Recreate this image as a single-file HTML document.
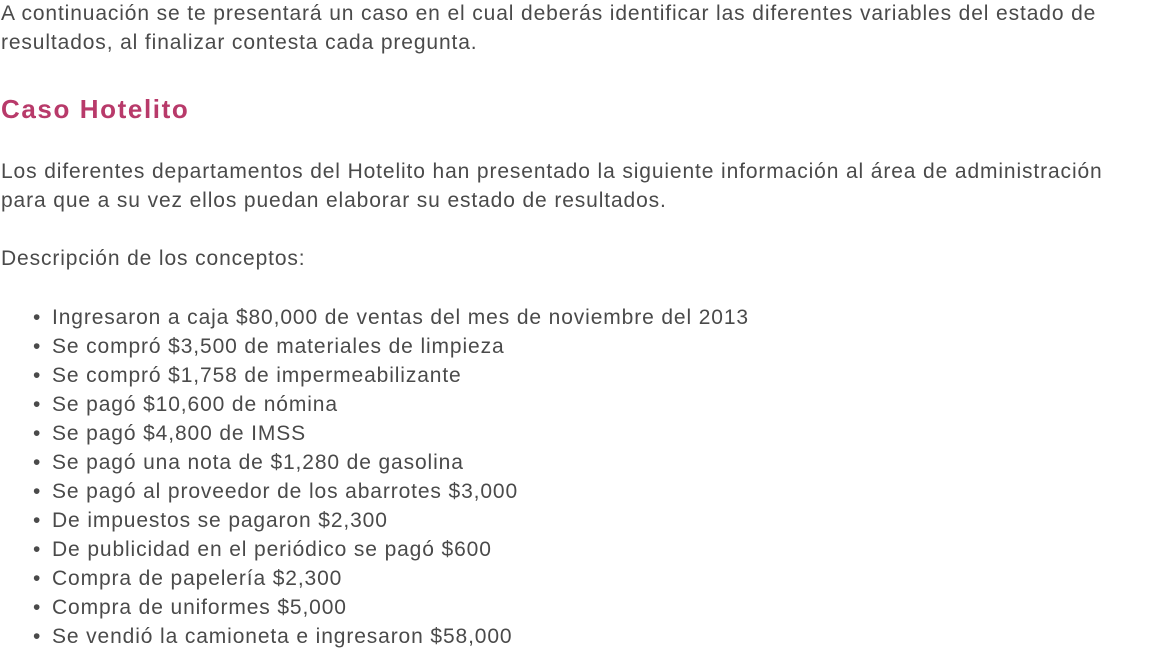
<!DOCTYPE html>
<html><head><meta charset="utf-8"><style>
body{margin:0;background:#fff;color:#4a4a4a;font-family:"Liberation Sans",sans-serif;font-size:21px;line-height:29px;letter-spacing:0.88px;}
.w{position:absolute;left:1px;top:0;width:1150px;white-space:nowrap}
p{margin:0}
h2{margin:0;color:#b83a6a;font-size:26px;font-weight:bold;line-height:29px;position:absolute;top:95px;left:1px;letter-spacing:1.6px}
ul{margin:0;padding:0;list-style:none}
li{position:relative;padding-left:51px}
li:before{content:"•";position:absolute;left:32px}
</style></head><body>
<div class="w" style="top:-1px">
<p>A continuación se te presentará un caso en el cual deberás identificar las diferentes variables del estado de<br>resultados, al finalizar contesta cada pregunta.</p>
</div>
<h2>Caso Hotelito</h2>
<div class="w" style="top:157px">
<p>Los diferentes departamentos del Hotelito han presentado la siguiente información al área de administración<br>para que a su vez ellos puedan elaborar su estado de resultados.</p>
</div>
<div class="w" style="top:244px"><p>Descripción de los conceptos:</p></div>
<div class="w" style="top:303px">
<ul>
<li>Ingresaron a caja $80,000 de ventas del mes de noviembre del 2013</li>
<li>Se compró $3,500 de materiales de limpieza</li>
<li>Se compró $1,758 de impermeabilizante</li>
<li>Se pagó $10,600 de nómina</li>
<li>Se pagó $4,800 de IMSS</li>
<li>Se pagó una nota de $1,280 de gasolina</li>
<li>Se pagó al proveedor de los abarrotes $3,000</li>
<li>De impuestos se pagaron $2,300</li>
<li>De publicidad en el periódico se pagó $600</li>
<li>Compra de papelería $2,300</li>
<li>Compra de uniformes $5,000</li>
<li>Se vendió la camioneta e ingresaron $58,000</li>
</ul>
</div>
</body></html>
